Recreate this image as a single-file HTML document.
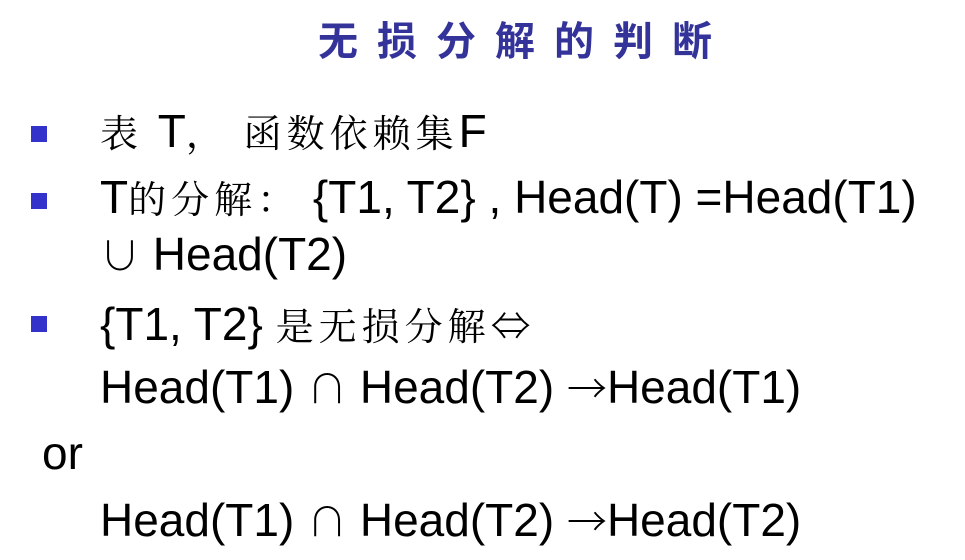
<!DOCTYPE html>
<html><head><meta charset="utf-8"><style>
body{margin:0;width:965px;height:560px;background:#fff;position:relative;overflow:hidden;font-family:"Liberation Sans","Noto Sans CJK SC",sans-serif;color:#000}
.t{position:absolute;left:318px;top:20px;font-size:40px;line-height:44px;font-weight:bold;color:#333399;letter-spacing:19px;font-family:"Liberation Sans","Noto Sans CJK SC",sans-serif;white-space:nowrap}
.l{position:absolute;left:100px;font-size:46px;line-height:50px;white-space:nowrap}
.c{font-family:"Noto Serif CJK SC",serif;font-size:38px;letter-spacing:5px}
.s{font-family:"Noto Sans CJK SC",sans-serif;font-size:40px;font-weight:300}
.b{position:absolute;left:31px;width:16px;height:16px;background:#3333cc}
</style></head><body>
<div class="t">无损分解的判断</div>
<div class="b" style="top:126px"></div>
<div class="b" style="top:193px"></div>
<div class="b" style="top:316px"></div>
<div class="l" style="top:106px"><span class="c">表 </span>T<span class="c">， 函数依赖集</span>F</div>
<div class="l" style="top:172px">T<span class="c">的分解：</span> {T1, T2} , Head(T) =Head(T1)</div>
<div class="l" style="top:228px"><span class="s">∪</span> Head(T2)</div>
<div class="l" style="top:298px">{T1, T2} <span class="c">是无损分解</span><span class="s">⇔</span></div>
<div class="l" style="top:361px">Head(T1) <span class="s">∩</span> Head(T2) <span class="s">→</span>Head(T1)</div>
<div class="l" style="top:428px;left:42px">or</div>
<div class="l" style="top:494px">Head(T1) <span class="s">∩</span> Head(T2) <span class="s">→</span>Head(T2)</div>
</body></html>
